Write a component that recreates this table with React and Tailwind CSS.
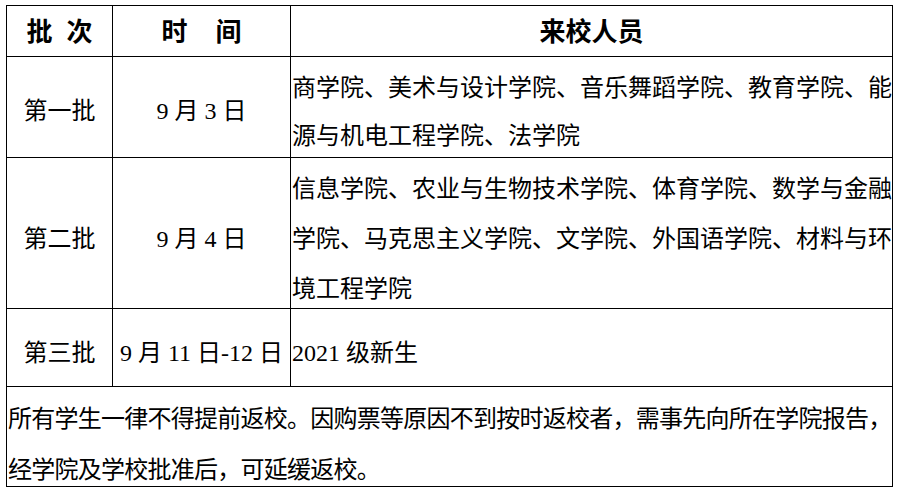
import React from 'react';

const cell = 'border-r border-b border-black';
const center = 'flex items-center justify-center whitespace-nowrap';

const App = () => {
  return (
    <div className="w-[899px] h-[495px] bg-white pl-[6px] pt-[5px] text-black font-['Liberation_Serif','Noto_Sans_CJK_SC',serif] text-[24px]">
      <div className="grid w-[887px] grid-cols-[106px_178px_602px] grid-rows-[51px_101px_151px_78px_100px] border-l border-t border-black">
        {/* En-tête */}
        <div className={`${cell} ${center} pt-[4px] font-bold text-[26px] leading-none`}>
          <span>批</span>
          <span className="ml-[14px]">次</span>
        </div>
        <div className={`${cell} ${center} pt-[4px] font-bold text-[26px] leading-none`}>
          <span>时</span>
          <span className="ml-[28px]">间</span>
        </div>
        <div className={`${cell} ${center} pt-[4px] font-bold text-[26px] leading-none`}>
          来校人员
        </div>

        {/* Premier lot */}
        <div className={`${cell} ${center} pt-[7px] leading-none`}>第一批</div>
        <div className={`${cell} ${center} pt-[7px] leading-none`}>9 月 3 日</div>
        <div className={`${cell} pl-[1px] pt-[7px] leading-[48px] whitespace-nowrap`}>
          商学院、美术与设计学院、音乐舞蹈学院、教育学院、能
          <br />
          源与机电工程学院、法学院
        </div>

        {/* Deuxième lot */}
        <div className={`${cell} ${center} pt-[11px] leading-none`}>第二批</div>
        <div className={`${cell} ${center} pt-[11px] leading-none`}>9 月 4 日</div>
        <div className={`${cell} pl-[1px] pt-[6px] leading-[50px] whitespace-nowrap`}>
          信息学院、农业与生物技术学院、体育学院、数学与金融
          <br />
          学院、马克思主义学院、文学院、外国语学院、材料与环
          <br />
          境工程学院
        </div>

        {/* Troisième lot */}
        <div className={`${cell} ${center} pt-[10px] leading-none`}>第三批</div>
        <div className={`${cell} ${center} pt-[10px] leading-none`}>9 月 11 日-12 日</div>
        <div className={`${cell} flex items-center pl-[1px] pt-[10px] leading-none whitespace-nowrap`}>
          2021 级新生
        </div>

        {/* Remarque */}
        <div className={`${cell} col-span-3 pl-[1px] pt-[7px] leading-[51px] tracking-[-0.75px] whitespace-nowrap`}>
          所有学生一律不得提前返校。因购票等原因不到按时返校者，需事先向所在学院报告，
          <br />
          经学院及学校批准后，可延缓返校。
        </div>
      </div>
    </div>
  );
};

export default App;
